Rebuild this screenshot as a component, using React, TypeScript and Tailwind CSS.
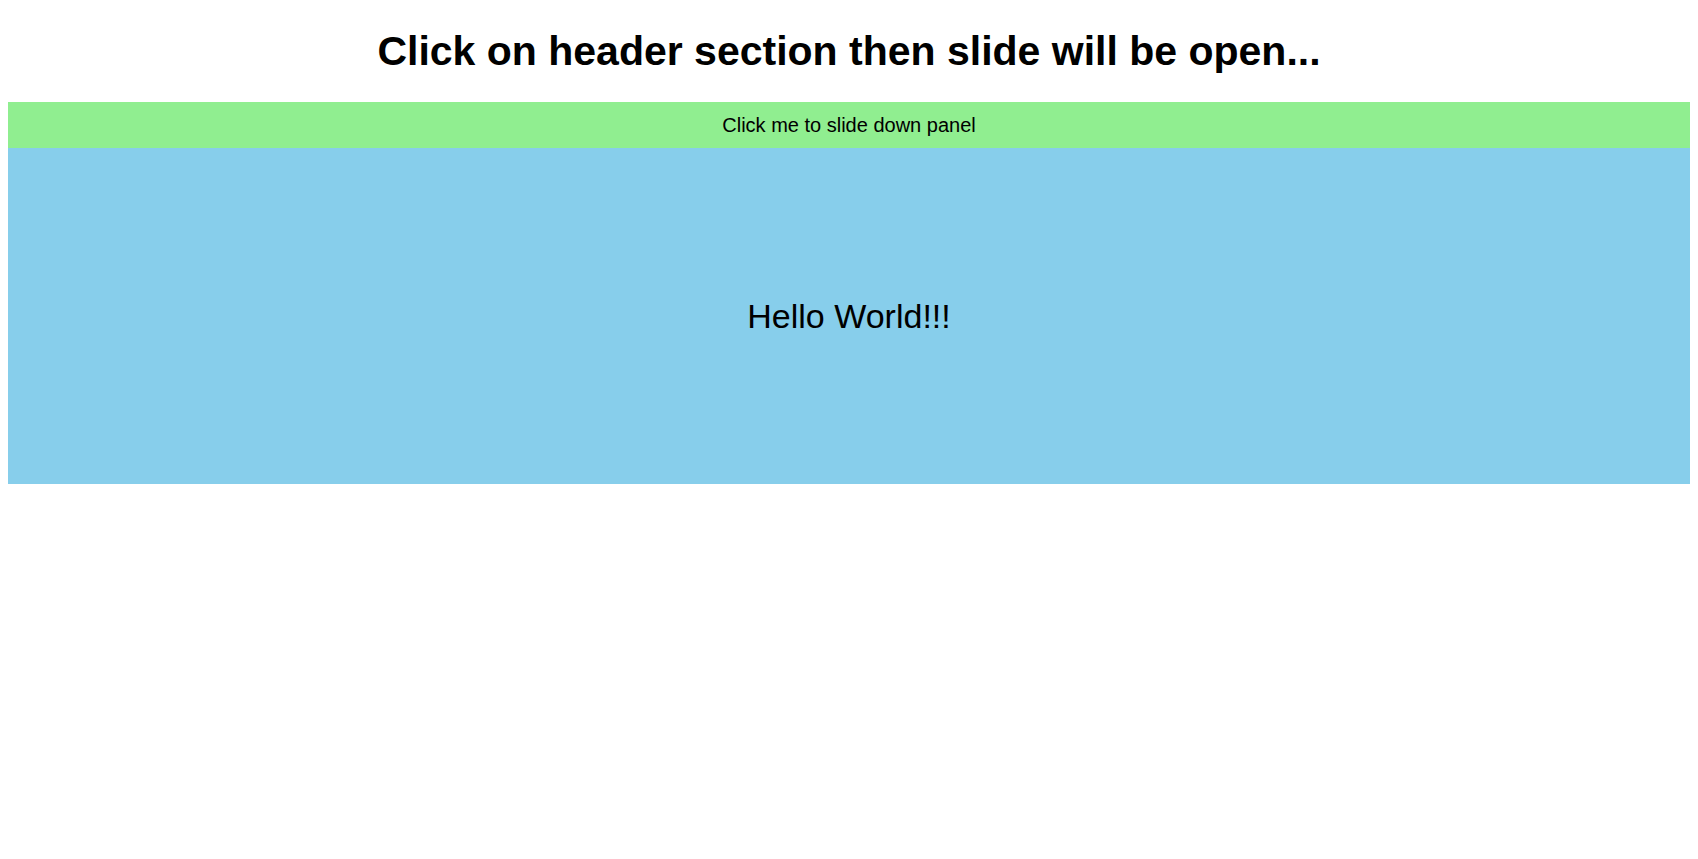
import React from 'react';

const App: React.FC = () => {
  return (
    <div className="min-h-screen bg-white px-[8px] font-['Liberation_Sans',Arial,sans-serif] text-black">
      <h1 className="pt-[28px] mb-[27px] text-center text-[41px] leading-[47px] font-bold">
        Click on header section then slide will be open...
      </h1>
      <div className="flex h-[46px] items-center justify-center bg-[#90ee90] text-[20px]">
        Click me to slide down panel
      </div>
      <div className="flex h-[336px] items-center justify-center bg-[#87ceeb] text-[34px]">
        Hello World!!!
      </div>
    </div>
  );
};

export default App;
